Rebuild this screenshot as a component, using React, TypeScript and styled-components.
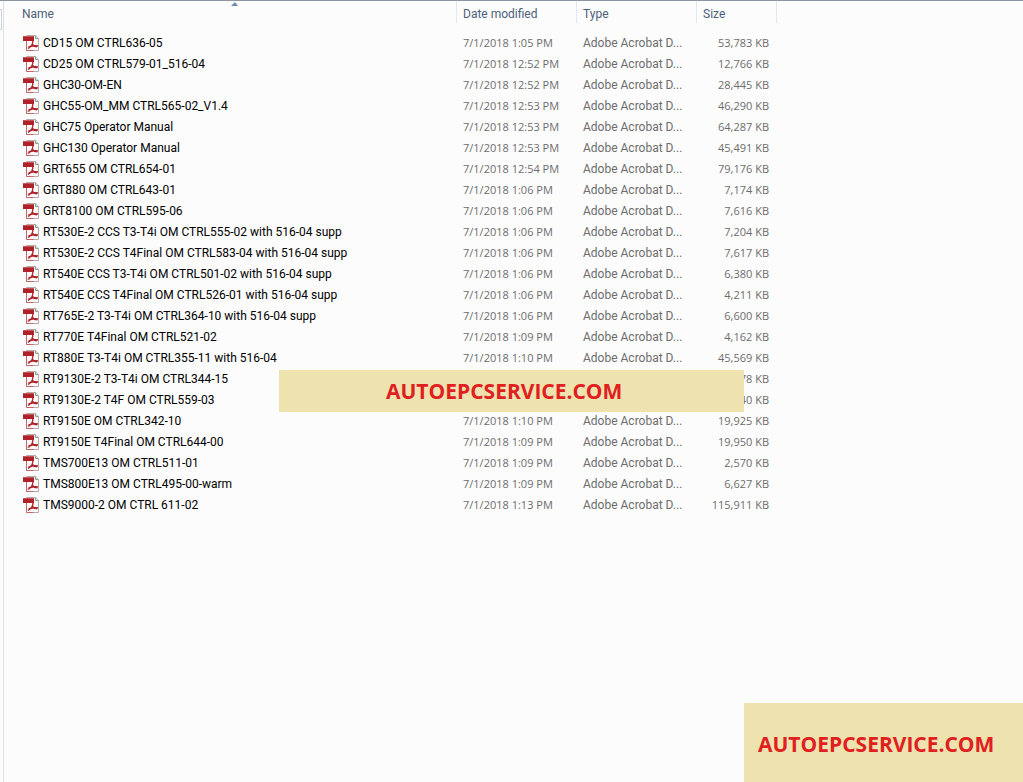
import React from "react";
import styled, { createGlobalStyle } from "styled-components";

const GlobalStyle = createGlobalStyle`
  * { box-sizing: border-box; }
  body {
    margin: 0;
    background: #fcfcfc;
    font-family: Roboto, "Open Sans", sans-serif;
    font-size: 12px;
  }
`;

const Explorer = styled.div`
  position: relative;
  display: flex;
  min-height: 100vh;
  border-top: 1px solid #8f949e;
  overflow: hidden;
`;

const NavEdge = styled.div`
  width: 4px;
  flex: none;
  padding-top: 8px;
  border-right: 1px solid #dbe1ea;
`;

const NavThumb = styled.div`
  width: 2px;
  height: 21px;
  border: solid #cfd4dc;
  border-width: 1px 1px 1px 0;
`;

const ListPane = styled.main`
  flex: 1;
  min-width: 0;
`;

const FileTable = styled.table`
  table-layout: fixed;
  width: 773px;
  border-collapse: separate;
  border-spacing: 0;
`;

const Col = styled.col<{ $width: number }>`
  width: ${(p) => p.$width}px;
`;

const HeaderCell = styled.th<{ $first?: boolean }>`
  position: relative;
  height: 31px;
  padding: 0 0 0 ${(p) => (p.$first ? 18 : 6)}px;
  vertical-align: top;
  text-align: left;
  background: linear-gradient(#e3e8f0, #e3e8f0) right top / 1px 22px no-repeat;
`;

const SortButton = styled.button`
  display: block;
  width: 100%;
  height: 26px;
  padding: 0;
  border: 0;
  background: none;
  color: #4c607a;
  font: inherit;
  font-weight: 400;
  text-align: left;
`;

const SortArrow = styled.svg`
  position: absolute;
  top: 1px;
  left: 50%;
  display: block;
`;

const Cell = styled.td<{ $align?: "right" }>`
  height: 21px;
  padding: 0 8px 0 ${(p) => (p.$align ? 0 : 6)}px;
  color: #6d6d6d;
  line-height: 20px;
  text-align: ${(p) => p.$align ?? "left"};
  white-space: nowrap;
`;

const FigureCell = styled(Cell)`
  font-family: "Open Sans", sans-serif;
  font-size: 11px;
`;

const NameCell = styled(Cell)`
  padding: 0 0 0 19px;
  color: #000;
`;

const FileName = styled.span`
  display: flex;
  align-items: center;
  gap: 4px;
`;

const Watermark = styled.div`
  position: absolute;
  display: flex;
  align-items: center;
  background: #eee2ae;
  color: #e0201f;
  font-family: "Open Sans", sans-serif;
  font-size: 21px;
  font-weight: 700;
  line-height: 30px;
`;

const CenterMark = styled(Watermark)`
  top: 369px;
  left: 279px;
  width: 465px;
  height: 42px;
  padding-left: 107px;
`;

const CornerMark = styled(Watermark)`
  right: 0;
  bottom: 0;
  width: 279px;
  height: 79px;
  padding: 2px 0 0 14px;
`;

const PdfIcon = () => (
  <svg width="16" height="16" viewBox="0 0 16 16" aria-hidden="true">
    <path d="M3.5.5h9l3 3v12h-12z" fill="#fdf9f9" stroke="#b5abab" />
    <path d="M12.5.5v3h3" fill="#d9e2dc" stroke="#8fa096" />
    <path d="M3.500 6v9.500h7" fill="none" stroke="#c2686b" />
    <path d="M0 1h11v5H0z" fill="#b0222a" />
    <path d="M0 1h11v1H0z" fill="#c9555b" />
    <path
      d="M9.500 5c.8 1.500.4 3.300-.6 4.800C7.800 11.500 6.500 12.800 4.800 13.200M5.500 12c3-.9 6.500-1.600 9.500-1M9 8.800c.9 1.500 2.500 2.700 5 3"
      fill="none"
      stroke="#b0222a"
      strokeWidth="1.400"
    />
  </svg>
);

const columns = ["Name", "Date modified", "Type", "Size"];
const pdfType = "Adobe Acrobat D...";

const files: { name: string; date?: string; type?: string; size: string }[] = [
  ["CD15 OM CTRL636-05", "1:05", "53,783"],
  ["CD25 OM CTRL579-01_516-04", "12:52", "12,766"],
  ["GHC30-OM-EN", "12:52", "28,445"],
  ["GHC55-OM_MM CTRL565-02_V1.4", "12:53", "46,290"],
  ["GHC75 Operator Manual", "12:53", "64,287"],
  ["GHC130 Operator Manual", "12:53", "45,491"],
  ["GRT655 OM CTRL654-01", "12:54", "79,176"],
  ["GRT880 OM CTRL643-01", "1:06", "7,174"],
  ["GRT8100 OM CTRL595-06", "1:06", "7,616"],
  ["RT530E-2 CCS T3-T4i OM CTRL555-02 with 516-04 supp", "1:06", "7,204"],
  ["RT530E-2 CCS T4Final OM CTRL583-04 with 516-04 supp", "1:06", "7,617"],
  ["RT540E CCS T3-T4i OM CTRL501-02 with 516-04 supp", "1:06", "6,380"],
  ["RT540E CCS T4Final OM CTRL526-01 with 516-04 supp", "1:06", "4,211"],
  ["RT765E-2 T3-T4i OM CTRL364-10 with 516-04 supp", "1:06", "6,600"],
  ["RT770E T4Final OM CTRL521-02", "1:09", "4,162"],
  ["RT880E T3-T4i OM CTRL355-11 with 516-04", "1:10", "45,569"],
  ["RT9130E-2 T3-T4i OM CTRL344-15", "", "78"],
  ["RT9130E-2 T4F OM CTRL559-03", "", "40"],
  ["RT9150E OM CTRL342-10", "1:10", "19,925"],
  ["RT9150E T4Final OM CTRL644-00", "1:09", "19,950"],
  ["TMS700E13 OM CTRL511-01", "1:09", "2,570"],
  ["TMS800E13 OM CTRL495-00-warm", "1:09", "6,627"],
  ["TMS9000-2 OM CTRL 611-02", "1:13", "115,911"],
].map(([name, time, size]) => ({
  name,
  date: time ? `7/1/2018 ${time} PM` : undefined,
  type: time ? pdfType : undefined,
  size: `${size} KB`,
}));

export default function App() {
  return (
    <>
      <GlobalStyle />
      <Explorer>
        <NavEdge>
          <NavThumb />
        </NavEdge>
        <ListPane>
          <FileTable>
            <colgroup>
              <Col $width={453} />
              <Col $width={120} />
              <Col $width={120} />
              <Col $width={80} />
            </colgroup>
            <thead>
              <tr>
                {columns.map((label, i) => (
                  <HeaderCell key={label} scope="col" $first={i === 0}>
                    <SortButton type="button">{label}</SortButton>
                    {i === 0 && (
                      <SortArrow width="7" height="4" viewBox="0 0 7 4" aria-hidden="true">
                        <path d="M4 0l3 4H0z" fill="#6f8ba8" />
                      </SortArrow>
                    )}
                  </HeaderCell>
                ))}
              </tr>
            </thead>
            <tbody>
              {files.map((file) => (
                <tr key={file.name}>
                  <NameCell>
                    <FileName>
                      <PdfIcon />
                      {file.name}
                    </FileName>
                  </NameCell>
                  <FigureCell>{file.date}</FigureCell>
                  <Cell>{file.type}</Cell>
                  <FigureCell $align="right">{file.size}</FigureCell>
                </tr>
              ))}
            </tbody>
          </FileTable>
        </ListPane>
        <CenterMark>AUTOEPCSERVICE.COM</CenterMark>
        <CornerMark>AUTOEPCSERVICE.COM</CornerMark>
      </Explorer>
    </>
  );
}
